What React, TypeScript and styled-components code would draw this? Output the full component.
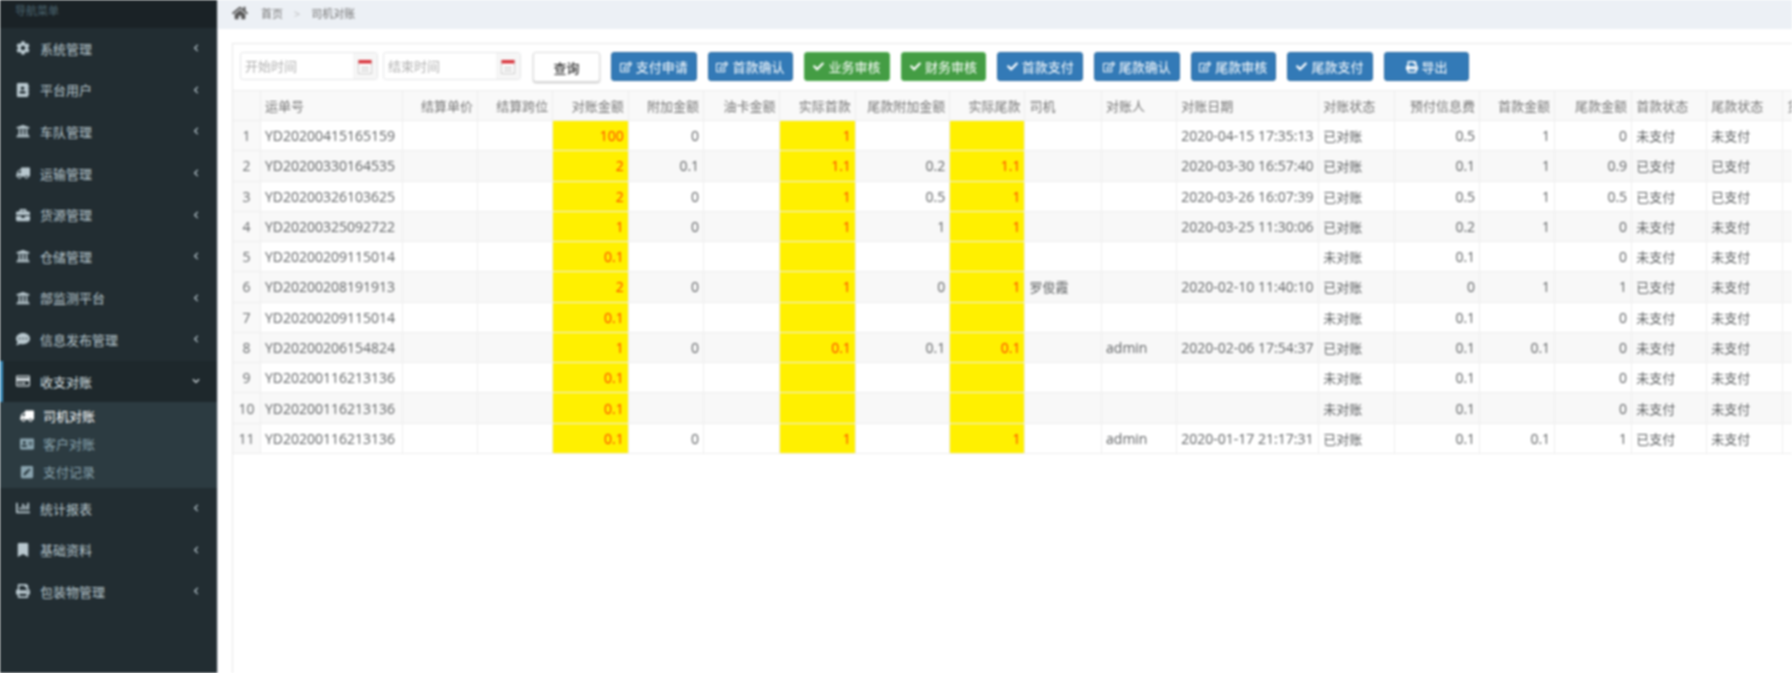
import React from "react";
import styled, { createGlobalStyle } from "styled-components";
import {
  FaCog, FaAddressBook, FaUniversity, FaTruck, FaBriefcase, FaCommentDots, FaRegCreditCard,
  FaAddressCard, FaPenSquare, FaChartBar, FaBookmark, FaPrint, FaCheck, FaRegEdit, FaHome,
  FaChevronLeft, FaChevronDown,
} from "react-icons/fa";

const Global = createGlobalStyle`
  html, body { margin: 0; padding: 0; height: 100%; overflow: hidden; background: #fff; }
  body { font-family: "Open Sans", "Noto Sans CJK SC", sans-serif; }
`;

const Shell = styled.div`
  display: flex;
  width: 1792px;
  height: 673px;
  overflow: hidden;
  filter: blur(0.8px);
`;

const Sidebar = styled.aside`
  flex: 0 0 217px;
  background: #222d32;
  border-right: 1px solid #d2d6de;
  color: #b8c7ce;
  font-size: 13px;
`;

const NavHeader = styled.div`
  height: 28px;
  padding-left: 15px;
  background: #1a2226;
  color: #4b646f;
  font-size: 11px;
  line-height: 22px;
`;

const NavItem = styled.div<{ $active?: boolean }>`
  height: 41.6px;
  display: flex;
  align-items: center;
  padding-right: 17px;
  padding-bottom: 1px;
  box-sizing: border-box;
  background: ${(p) => (p.$active ? "#1e282c" : "transparent")};
  border-left: ${(p) => (p.$active ? "3px solid #3c8dbc" : "0")};
  padding-left: ${(p) => (p.$active ? "13px" : "16px")};
  color: ${(p) => (p.$active ? "#d8e0e4" : "#b8c7ce")};
`;

const NavIcon = styled.span`
  flex: 0 0 24px;
  display: flex;
  align-items: center;
  font-size: 14px;
`;

const NavLabel = styled.span`
  flex: 1;
`;

const Chevron = styled.span`
  display: flex;
  font-size: 8px;
`;

const FlipTruck = styled(FaTruck)`
  transform: scaleX(-1);
`;

const SubMenu = styled.div`
  height: 85.6px;
  padding: 0;
  box-sizing: border-box;
  background: #2c3b41;
`;

const SubItem = styled.div<{ $active?: boolean }>`
  height: 28px;
  display: flex;
  align-items: center;
  padding-left: 20px;
  padding-bottom: 1px;
  box-sizing: border-box;
  color: ${(p) => (p.$active ? "#fff" : "#8aa4af")};
`;

const SubIcon = styled.span`
  flex: 0 0 23px;
  display: flex;
  align-items: center;
  font-size: 14px;
`;

const Main = styled.main`
  flex: 1;
  min-width: 0;
  overflow: hidden;
`;

const Crumbs = styled.div`
  height: 29px;
  padding: 0 0 0 14px;
  display: flex;
  align-items: center;
  gap: 5px;
  background: #ecf0f5;
  color: #777;
  font-size: 11px;
`;

const HomeIcon = styled.span`
  display: flex;
  width: 24px;
  font-size: 16px;
  color: #5a5a5a;
  margin-top: -4px;
`;

const CrumbText = styled.span`
  margin-top: -3px;
`;

const CrumbSep = styled.span`
  margin: -3px 6px 0;
  color: #bbb;
`;

const Panel = styled.section`
  margin: 14px 0 0 14px;
  height: 630px;
  border-top: 1px solid #e7e7e7;
  border-left: 1px solid #e7e7e7;
  overflow: hidden;
`;

const Toolbar = styled.div`
  height: 46px;
  display: flex;
  align-items: flex-start;
  padding: 8px 0 0 7px;
  box-sizing: border-box;
`;

const DateField = styled.div`
  width: 138px;
  height: 28px;
  margin-right: 5px;
  display: flex;
  border: 1px solid #e5e6e7;
  border-radius: 3px;
  box-sizing: border-box;
  overflow: hidden;
`;

const DatePlaceholder = styled.span`
  flex: 1;
  padding-left: 4px;
  color: #b0b0b0;
  font-size: 13px;
  line-height: 26px;
`;

const DateAddon = styled.span`
  flex: 0 0 24px;
  display: flex;
  align-items: center;
  justify-content: center;
  background: #f6f6f6;
`;

const QueryBtn = styled.button`
  width: 67px;
  height: 30px;
  margin: 0 11px 0 7px;
  padding: 0;
  background: #fff;
  border: 1px solid #ddd;
  border-radius: 3px;
  box-shadow: 0 1px 2px rgba(0, 0, 0, 0.25);
  color: #333;
  font: 500 13px "Open Sans", "Noto Sans CJK SC", sans-serif;
`;

const ActionBtn = styled.button<{ $green?: boolean }>`
  width: 85.6px;
  height: 29px;
  margin-right: 11px;
  padding: 0;
  display: flex;
  align-items: center;
  justify-content: center;
  gap: 4px;
  background: ${(p) => (p.$green ? "#449d44" : "#337ab7")};
  border: 1px solid ${(p) => (p.$green ? "#4cae4c" : "#2e6da4")};
  border-radius: 3px;
  color: #fff;
  font: 13px "Open Sans", "Noto Sans CJK SC", sans-serif;
`;

const Table = styled.table`
  table-layout: fixed;
  width: 1629.7px;
  border-collapse: collapse;
  color: #676a6c;
  font-size: 14px;
`;

const Col = styled.col<{ $w: number }>`
  width: ${(p) => p.$w}px;
`;

const HeadCell = styled.th<{ $right?: boolean }>`
  height: 30px;
  padding: 0 4px;
  box-sizing: border-box;
  background: #f9f9f9;
  border: 1px solid #eee;
  border-left: 0;
  font-size: 13px;
  font-weight: 400;
  color: #777;
  white-space: nowrap;
  overflow: hidden;
  text-align: ${(p) => (p.$right ? "right" : "left")};
`;

const Row = styled.tr<{ $odd: boolean }>`
  height: 30.27px;
  background: ${(p) => (p.$odd ? "#fff" : "#f8f8f8")};
`;

const Cell = styled.td<{ $right?: boolean; $hot?: boolean; $cjk?: boolean }>`
  padding: 0 4px;
  box-sizing: border-box;
  border-bottom: 1px solid #eee;
  border-right: 1px solid #eee;
  background: ${(p) => (p.$hot ? "#fff000" : "transparent")};
  color: ${(p) => (p.$hot ? "#ff3c00" : "#5f6264")};
  font-size: ${(p) => (p.$cjk ? "13px" : "14px")};
  white-space: nowrap;
  overflow: hidden;
  text-align: ${(p) => (p.$right ? "right" : "left")};
`;

const IndexCell = styled.td`
  padding: 0;
  text-align: center;
  background: #f9f9f9;
  border-bottom: 1px solid #eee;
  border-right: 1px solid #eee;
`;

const Calendar = () => (
  <svg width="14" height="15" viewBox="0 0 14 15">
    <rect x="0.5" y="1.5" width="13" height="13" fill="#fff" stroke="#ccc" />
    <rect x="0.5" y="1" width="13" height="3.5" fill="#d9363e" />
    <rect x="3" y="8" width="8" height="1" fill="#bbb" />
    <rect x="3" y="11" width="8" height="1" fill="#bbb" />
  </svg>
);

const navTop = [
  { icon: <FaCog />, label: "系统管理" },
  { icon: <FaAddressBook />, label: "平台用户" },
  { icon: <FaUniversity />, label: "车队管理" },
  { icon: <FlipTruck />, label: "运输管理" },
  { icon: <FaBriefcase />, label: "货源管理" },
  { icon: <FaUniversity />, label: "仓储管理" },
  { icon: <FaUniversity />, label: "部监测平台" },
  { icon: <FaCommentDots />, label: "信息发布管理" },
];
const navBottom = [
  { icon: <FaChartBar />, label: "统计报表" },
  { icon: <FaBookmark />, label: "基础资料" },
  { icon: <FaPrint />, label: "包装物管理" },
];

const actions = [
  { t: "支付申请", i: "e" }, { t: "首款确认", i: "e" }, { t: "业务审核", i: "c", g: true },
  { t: "财务审核", i: "c", g: true }, { t: "首款支付", i: "c" }, { t: "尾款确认", i: "e" },
  { t: "尾款审核", i: "e" }, { t: "尾款支付", i: "c" },
];

const widths = [27.5, 141.5, 75.4, 75.4, 75.4, 75.4, 76.4, 75.4, 94.3, 75.3, 76.6, 75.3, 141.8, 76, 85, 75, 77, 75, 76, 80];
const heads = ["", "运单号", "结算单价", "结算跨位", "对账金额", "附加金额", "油卡金额", "实际首款", "尾款附加金额", "实际尾款", "司机", "对账人", "对账日期", "对账状态", "预付信息费", "首款金额", "尾款金额", "首款状态", "尾款状态", "货物状态"];
const rightCols = new Set([2, 3, 4, 5, 6, 7, 8, 9, 14, 15, 16]);
const hotCols = new Set([4, 7, 9]);
const cjkCols = new Set([10, 13, 17, 18, 19]);

const P = "已支付", U = "未支付", A = "已对账", N = "未对账";
const rows: string[][] = [
  ["YD20200415165159", "", "", "100", "0", "", "1", "", "", "", "", "2020-04-15 17:35:13", A, "0.5", "1", "0", U, U, ""],
  ["YD20200330164535", "", "", "2", "0.1", "", "1.1", "0.2", "1.1", "", "", "2020-03-30 16:57:40", A, "0.1", "1", "0.9", P, P, ""],
  ["YD20200326103625", "", "", "2", "0", "", "1", "0.5", "1", "", "", "2020-03-26 16:07:39", A, "0.5", "1", "0.5", P, P, ""],
  ["YD20200325092722", "", "", "1", "0", "", "1", "1", "1", "", "", "2020-03-25 11:30:06", A, "0.2", "1", "0", U, U, ""],
  ["YD20200209115014", "", "", "0.1", "", "", "", "", "", "", "", "", N, "0.1", "", "0", U, U, ""],
  ["YD20200208191913", "", "", "2", "0", "", "1", "0", "1", "罗俊霞", "", "2020-02-10 11:40:10", A, "0", "1", "1", P, U, ""],
  ["YD20200209115014", "", "", "0.1", "", "", "", "", "", "", "", "", N, "0.1", "", "0", U, U, ""],
  ["YD20200206154824", "", "", "1", "0", "", "0.1", "0.1", "0.1", "", "admin", "2020-02-06 17:54:37", A, "0.1", "0.1", "0", U, U, ""],
  ["YD20200116213136", "", "", "0.1", "", "", "", "", "", "", "", "", N, "0.1", "", "0", U, U, ""],
  ["YD20200116213136", "", "", "0.1", "", "", "", "", "", "", "", "", N, "0.1", "", "0", U, U, ""],
  ["YD20200116213136", "", "", "0.1", "0", "", "1", "", "1", "", "admin", "2020-01-17 21:17:31", A, "0.1", "0.1", "1", P, U, ""],
];

export default function App() {
  return (
    <Shell>
      <Global />
      <Sidebar>
        <NavHeader>导航菜单</NavHeader>
        {navTop.map((n) => (
          <NavItem key={n.label}>
            <NavIcon>{n.icon}</NavIcon>
            <NavLabel>{n.label}</NavLabel>
            <Chevron><FaChevronLeft /></Chevron>
          </NavItem>
        ))}
        <NavItem $active>
          <NavIcon><FaRegCreditCard /></NavIcon>
          <NavLabel>收支对账</NavLabel>
          <Chevron><FaChevronDown /></Chevron>
        </NavItem>
        <SubMenu>
          <SubItem $active><SubIcon><FlipTruck /></SubIcon>司机对账</SubItem>
          <SubItem><SubIcon><FaAddressCard /></SubIcon>客户对账</SubItem>
          <SubItem><SubIcon><FaPenSquare /></SubIcon>支付记录</SubItem>
        </SubMenu>
        {navBottom.map((n) => (
          <NavItem key={n.label}>
            <NavIcon>{n.icon}</NavIcon>
            <NavLabel>{n.label}</NavLabel>
            <Chevron><FaChevronLeft /></Chevron>
          </NavItem>
        ))}
      </Sidebar>
      <Main>
        <Crumbs>
          <HomeIcon><FaHome /></HomeIcon>
          <CrumbText>首页</CrumbText>
          <CrumbSep>&gt;</CrumbSep>
          <CrumbText>司机对账</CrumbText>
        </Crumbs>
        <Panel>
          <Toolbar>
            <DateField><DatePlaceholder>开始时间</DatePlaceholder><DateAddon><Calendar /></DateAddon></DateField>
            <DateField><DatePlaceholder>结束时间</DatePlaceholder><DateAddon><Calendar /></DateAddon></DateField>
            <QueryBtn>查询</QueryBtn>
            {actions.map((a) => (
              <ActionBtn key={a.t} $green={a.g}>
                {a.i === "e" ? <FaRegEdit size={12} /> : <FaCheck size={11} />}
                {a.t}
              </ActionBtn>
            ))}
            <ActionBtn><FaPrint size={12} />导出</ActionBtn>
          </Toolbar>
          <Table>
            <colgroup>
              {widths.map((w, i) => <Col key={i} $w={w} />)}
            </colgroup>
            <thead>
              <tr>
                {heads.map((h, i) => <HeadCell key={i} $right={rightCols.has(i)}>{h}</HeadCell>)}
              </tr>
            </thead>
            <tbody>
              {rows.map((r, ri) => (
                <Row key={ri} $odd={ri % 2 === 0}>
                  <IndexCell>{ri + 1}</IndexCell>
                  {r.map((v, ci) => (
                    <Cell
                      key={ci}
                      $right={rightCols.has(ci + 1)}
                      $hot={hotCols.has(ci + 1)}
                      $cjk={cjkCols.has(ci + 1)}
                    >
                      {v}
                    </Cell>
                  ))}
                </Row>
              ))}
            </tbody>
          </Table>
        </Panel>
      </Main>
    </Shell>
  );
}
